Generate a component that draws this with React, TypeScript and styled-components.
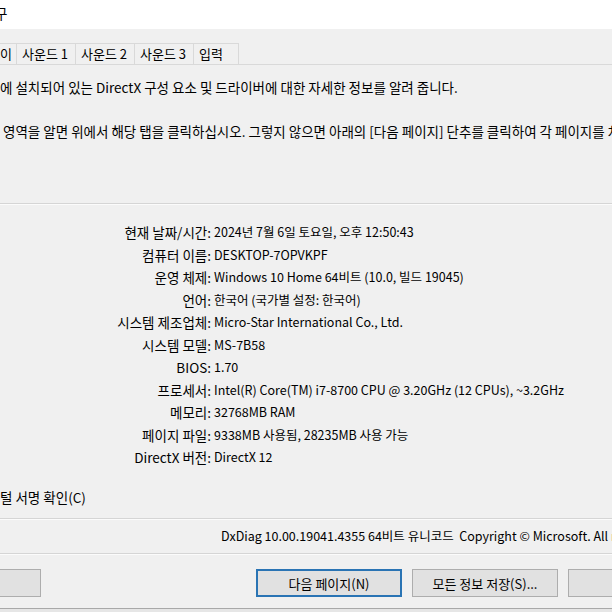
import styled, { createGlobalStyle } from 'styled-components';

const GlobalStyle = createGlobalStyle`
  html, body {
    margin: 0;
    padding: 0;
    background: #f0f0f0;
  }
  body {
    font-family: 'Noto Sans CJK KR', 'Noto Sans', sans-serif;
    font-size: 13.5px;
    color: #000;
  }
`;

const rows = [
  { label: '현재 날짜/시간:', value: '2024년 7월 6일 토요일, 오후 12:50:43' },
  { label: '컴퓨터 이름:', value: 'DESKTOP-7OPVKPF' },
  { label: '운영 체제:', value: 'Windows 10 Home 64비트 (10.0, 빌드 19045)' },
  { label: '언어:', value: '한국어 (국가별 설정: 한국어)' },
  { label: '시스템 제조업체:', value: 'Micro-Star International Co., Ltd.' },
  { label: '시스템 모델:', value: 'MS-7B58' },
  { label: 'BIOS:', value: '1.70' },
  { label: '프로세서:', value: 'Intel(R) Core(TM) i7-8700 CPU @ 3.20GHz (12 CPUs), ~3.2GHz' },
  { label: '메모리:', value: '32768MB RAM' },
  { label: '페이지 파일:', value: '9338MB 사용됨, 28235MB 사용 가능' },
  { label: 'DirectX 버전:', value: 'DirectX 12' },
];

const tabs = ['사운드 1', '사운드 2', '사운드 3', '입력'];

export default function App() {
  return (
    <>
      <GlobalStyle />
      <Window>
        <TitleBar>
          <Title>구</Title>
        </TitleBar>

        <TabStrip>
          <Tab $edge>이</Tab>
          {tabs.map(t => (
            <Tab key={t} $wide={t !== '입력'}>{t}</Tab>
          ))}
        </TabStrip>

        <Panel>
          <Desc>
            <Line>에 설치되어 있는 DirectX 구성 요소 및 드라이버에 대한 자세한 정보를 알려 줍니다.</Line>
            <Line />
            <Line $indent={3}>영역을 알면 위에서 해당 탭을 클릭하십시오. 그렇지 않으면 아래의 [다음 페이지] 단추를 클릭하여 각 페이지를 차례로 확인하십시오.</Line>
          </Desc>

          <Separator />

          <InfoGrid>
            {rows.map(r => (
              <InfoRow key={r.label}>
                <Label>{r.label}</Label>
                <Value>{r.value}</Value>
              </InfoRow>
            ))}
          </InfoGrid>

          <CheckLine>털 서명 확인(C)</CheckLine>
        </Panel>

        <Separator />

        <Footer>
          DxDiag 10.00.19041.4355 64비트 유니코드&nbsp;&nbsp;Copyright © Microsoft. All rights reserved.
        </Footer>

        <Separator />

        <ButtonBar>
          <Button $cut>도움말(H)</Button>
          <Spacer />
          <Button $default>다음 페이지(N)</Button>
          <Button>모든 정보 저장(S)...</Button>
          <Button>종료(X)</Button>
        </ButtonBar>

        <BottomEdge />
      </Window>
    </>
  );
}

const Window = styled.div`
  width: 612px;
  height: 612px;
  overflow: hidden;
  display: flex;
  flex-direction: column;
  background: #f0f0f0;
`;

const TitleBar = styled.div`
  height: 29px;
  flex-shrink: 0;
  background: #fff;
  padding-top: 4px;
  box-sizing: border-box;
`;

const Title = styled.div`
  line-height: 18px;
  text-indent: -5px;
`;

const TabStrip = styled.div`
  display: flex;
  align-items: flex-end;
  height: 36px;
  flex-shrink: 0;
  border-bottom: 1px solid #d9d9d9;
  box-sizing: border-box;
`;

const Tab = styled.div<{ $edge?: boolean; $wide?: boolean }>`
  height: 21px;
  box-sizing: border-box;
  flex-shrink: 0;
  width: ${p => (p.$edge ? '17px' : p.$wide ? '59px' : '45px')};
  border-top: 1px solid #d9d9d9;
  border-right: 1px solid #d9d9d9;
  padding-left: ${p => (p.$edge ? '0' : '5px')};
  font-size: 13px;
  line-height: 19px;
  white-space: nowrap;
  overflow: hidden;
  background: #f0f0f0;
`;

const Panel = styled.div`
  display: flex;
  flex-direction: column;
  flex-shrink: 0;
`;

const Desc = styled.div`
  padding-top: 11px;
  padding-bottom: 61px;
`;

const Line = styled.div<{ $indent?: number }>`
  height: 22px;
  line-height: 22px;
  white-space: nowrap;
  padding-left: ${p => p.$indent ?? 0}px;
`;

const Separator = styled.div`
  height: 1px;
  flex-shrink: 0;
  background: #d5d5d5;
  border-bottom: 1px solid #fbfbfb;
`;

const InfoGrid = styled.div`
  padding-top: 16px;
  display: flex;
  flex-direction: column;
`;

const InfoRow = styled.div`
  display: grid;
  grid-template-columns: 211px 1fr;
  column-gap: 3px;
  height: 22.5px;
  line-height: 22.5px;
  white-space: nowrap;
`;

const Label = styled.span`
  text-align: right;
`;

const Value = styled.span`
  font-size: 12.5px;
`;

const CheckLine = styled.div`
  margin-top: 17.5px;
  height: 32px;
  line-height: 22px;
  white-space: nowrap;
`;

const Footer = styled.div`
  height: 33px;
  flex-shrink: 0;
  line-height: 31px;
  padding-left: 221px;
  font-size: 12.5px;
  white-space: nowrap;
`;

const ButtonBar = styled.div`
  display: flex;
  align-items: flex-start;
  gap: 10px;
  padding-top: 14px;
  height: 53px;
  flex-shrink: 0;
  box-sizing: border-box;
`;

const Spacer = styled.div`
  width: 195px;
  flex-shrink: 0;
`;

const Button = styled.button<{ $default?: boolean; $cut?: boolean }>`
  width: 146px;
  height: 28px;
  flex-shrink: 0;
  box-sizing: border-box;
  font-family: inherit;
  font-size: 13px;
  color: #000;
  background: #e1e1e1;
  border: ${p => (p.$default ? '2px solid #2a74b4' : '1px solid #adadad')};
  margin-left: ${p => (p.$cut ? '-105px' : '0')};
  padding: 0;
`;

const BottomEdge = styled.div`
  border-top: 1px solid #a8a8a8;
  background: #e6e6e6;
  flex: 1;
`;
